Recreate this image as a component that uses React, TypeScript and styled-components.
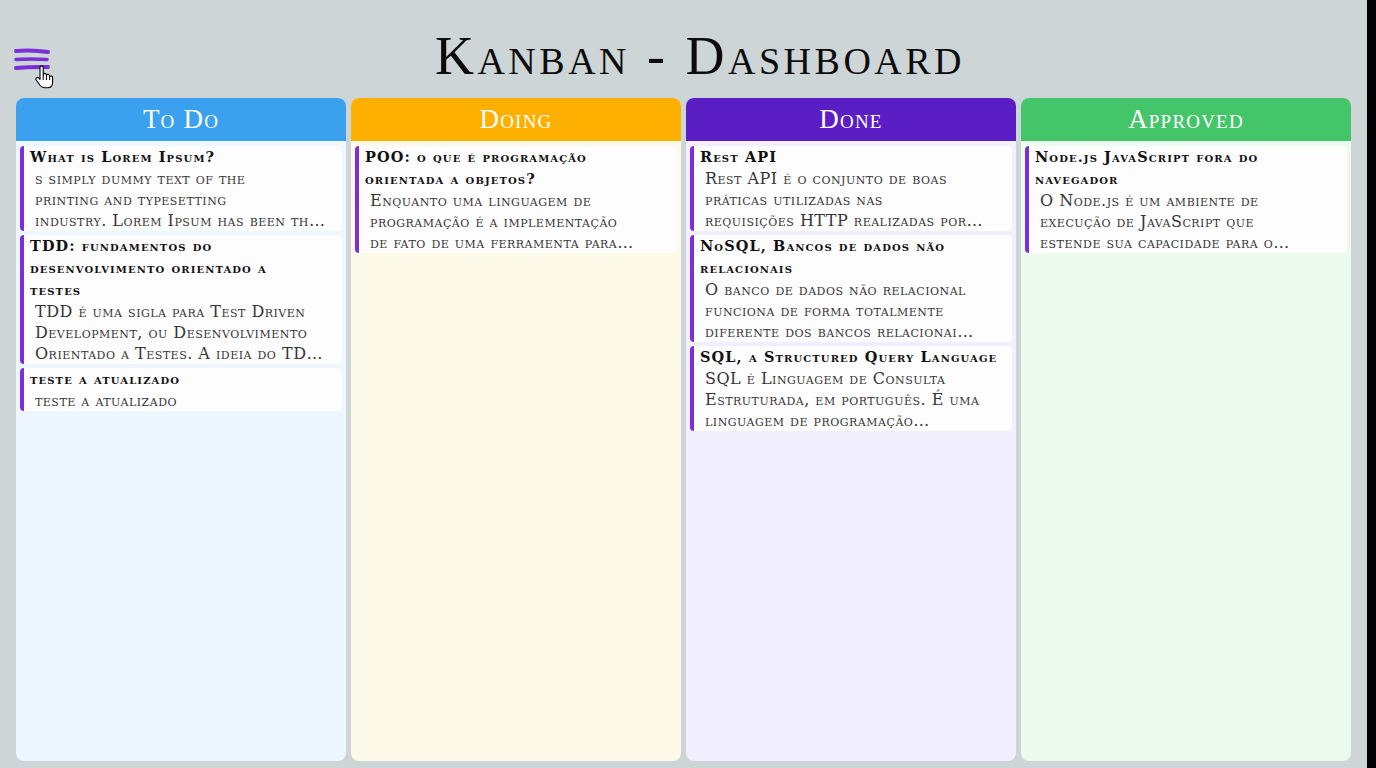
import * as React from 'react';
import styled, { createGlobalStyle } from 'styled-components';

const GlobalStyle = createGlobalStyle`
  html, body {
    margin: 0;
    padding: 0;
    background: #000;
  }
  * {
    box-sizing: border-box;
  }
`;

interface Task {
  title: string;
  lines: string[];
}

interface ColumnData {
  name: string;
  color: string;
  tint: string;
  tasks: Task[];
}

const columns: ColumnData[] = [
  {
    name: 'To Do',
    color: '#3ba1ee',
    tint: '#eef6ff',
    tasks: [
      {
        title: 'What is Lorem Ipsum?',
        lines: ['s simply dummy text of the', 'printing and typesetting', 'industry. Lorem Ipsum has been th\u2026'],
      },
      {
        title: 'TDD: fundamentos do\ndesenvolvimento orientado a\ntestes',
        lines: ['TDD é uma sigla para Test Driven', 'Development, ou Desenvolvimento', 'Orientado a Testes. A ideia do TD\u2026'],
      },
      {
        title: 'teste a atualizado',
        lines: ['teste a atualizado'],
      },
    ],
  },
  {
    name: 'Doing',
    color: '#feb001',
    tint: '#fdf9e9',
    tasks: [
      {
        title: 'POO: o que é programação\norientada a objetos?',
        lines: ['Enquanto uma linguagem de', 'programação é a implementação', 'de fato de uma ferramenta para\u2026'],
      },
    ],
  },
  {
    name: 'Done',
    color: '#5a1ec4',
    tint: '#f1effd',
    tasks: [
      {
        title: 'Rest API',
        lines: ['Rest API é o conjunto de boas', 'práticas utilizadas nas', 'requisições HTTP realizadas por\u2026'],
      },
      {
        title: 'NoSQL, Bancos de dados não\nrelacionais',
        lines: ['O banco de dados não relacional', 'funciona de forma totalmente', 'diferente dos bancos relacionai\u2026'],
      },
      {
        title: 'SQL, a Structured Query Language',
        lines: ['SQL é Linguagem de Consulta', 'Estruturada, em português. É uma', 'linguagem de programação\u2026'],
      },
    ],
  },
  {
    name: 'Approved',
    color: '#45c56a',
    tint: '#edfaee',
    tasks: [
      {
        title: 'Node.js JavaScript fora do\nnavegador',
        lines: ['O Node.js é um ambiente de', 'execução de JavaScript que', 'estende sua capacidade para o\u2026'],
      },
    ],
  },
];

const Page = styled.div`
  height: 100vh;
  margin-right: 9px;
  background: #cdd5d6;
  display: flex;
  flex-direction: column;
  font-family: 'DejaVu Serif', 'Liberation Serif', serif;
  font-variant: small-caps;
  overflow: hidden;
`;

const Header = styled.header`
  height: 98px;
  display: flex;
  align-items: flex-start;
`;

const MenuButton = styled.button`
  position: relative;
  width: 36px;
  height: 26px;
  margin: 48px 0 0 14px;
  padding: 0;
  border: none;
  background: transparent;
  cursor: pointer;
  flex-shrink: 0;
`;

const Cursor = styled.svg`
  position: absolute;
  left: 21px;
  top: 17px;
`;

const Title = styled.h1`
  flex: 1;
  margin: 25px 0 0;
  padding-right: 17px;
  text-align: center;
  font-family: 'Liberation Serif', serif;
  font-weight: 400;
  font-size: 54px;
  line-height: 62px;
  letter-spacing: 3.5px;
  color: #0c0c0c;
`;

const Board = styled.main`
  flex: 1;
  display: flex;
  gap: 5px;
  padding: 0 16px 7px;
  min-height: 0;
`;

const Column = styled.section<{ $tint: string }>`
  flex: 1;
  min-width: 0;
  background: ${props => props.$tint};
  border-radius: 8px;
  display: flex;
  flex-direction: column;
  overflow: hidden;
`;

const ColumnHeader = styled.h2<{ $color: string }>`
  margin: 0;
  height: 43px;
  background: ${props => props.$color};
  color: #fff;
  text-align: center;
  font-family: 'Liberation Serif', serif;
  font-weight: 400;
  font-size: 27px;
  line-height: 43px;
  letter-spacing: 1.2px;
`;

const CardList = styled.div`
  display: flex;
  flex-direction: column;
  gap: 4px;
  padding: 5px 4px;
`;

const Card = styled.article`
  background: #fdfdfe;
  border-left: 4px solid #7c2fd8;
  border-radius: 4px;
  padding: 0 0 0 6px;
`;

const CardTitle = styled.h3`
  margin: 0;
  font-size: 14.5px;
  font-weight: 700;
  line-height: 22px;
  color: #111;
  letter-spacing: 1.1px;
  white-space: pre-line;
`;

const CardText = styled.p`
  margin: 0;
  padding: 0 4px 0 5px;
  font-size: 16px;
  line-height: 21px;
  color: #353535;
  letter-spacing: 0.5px;
`;

const TextLine = styled.span`
  display: block;
  white-space: nowrap;
  overflow: hidden;
  text-overflow: ellipsis;
`;

const MenuIcon = () => (
  <svg width="36" height="26" viewBox="0 0 36 26">
    <path d="M2 3 Q18 1.5 34 4" stroke="#7b2fd6" strokeWidth="4" strokeLinecap="round" fill="none" />
    <path d="M2 11.5 Q18 10.5 33 11.5" stroke="#7b2fd6" strokeWidth="3.5" strokeLinecap="round" fill="none" />
    <path d="M2 20 Q18 18.5 34 19" stroke="#7b2fd6" strokeWidth="4" strokeLinecap="round" fill="none" />
  </svg>
);

const HandCursor = () => (
  <Cursor width="19" height="24" viewBox="0 0 19 24">
    <path
      d="M5 2.5 a1.6 1.6 0 0 1 3.2 0 V10 a1.6 1.6 0 0 1 3.2 0 V11 a1.6 1.6 0 0 1 3.2 0 V12 a1.6 1.6 0 0 1 3 0 V17.5 c0 3 -2 5.2 -5 5.2 H9.5 c-2 0 -3.2 -0.8 -4.3 -2.2 L1.2 15 a1.6 1.6 0 0 1 2.4 -2.1 L5 14.3 Z"
      fill="#fff"
      stroke="#000"
      strokeWidth="1.1"
      strokeLinejoin="round"
    />
    <path d="M8.2 10 V15 M11.4 11 V15 M14.6 12 V15" stroke="#000" strokeWidth="1" />
  </Cursor>
);

export default function App() {
  return (
    <>
      <GlobalStyle />
      <Page>
        <Header>
          <MenuButton aria-label="menu">
            <MenuIcon />
            <HandCursor />
          </MenuButton>
          <Title>Kanban - Dashboard</Title>
        </Header>
        <Board>
          {columns.map(column => (
            <Column key={column.name} $tint={column.tint}>
              <ColumnHeader $color={column.color}>{column.name}</ColumnHeader>
              <CardList>
                {column.tasks.map(task => (
                  <Card key={task.title}>
                    <CardTitle>{task.title}</CardTitle>
                    <CardText>
                      {task.lines.map(line => (
                        <TextLine key={line}>{line}</TextLine>
                      ))}
                    </CardText>
                  </Card>
                ))}
              </CardList>
            </Column>
          ))}
        </Board>
      </Page>
    </>
  );
}
